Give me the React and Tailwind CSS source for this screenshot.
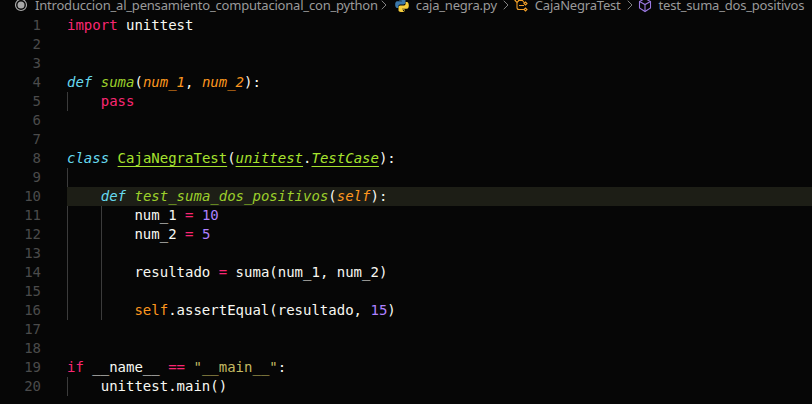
import { ChevronRight } from 'lucide-react'

const C = {
  kw: 'text-[#f92672]',
  def: 'text-[#66d9ef] italic',
  fn: 'text-[#a6e22e]',
  fnI: 'text-[#9ccf2b] italic',
  cls: 'text-[#a6e22e] underline underline-offset-[3px]',
  clsI: 'text-[#a6e22e] italic underline underline-offset-[3px]',
  par: 'text-[#fd971f] italic',
  self: 'text-[#fd971f]',
  num: 'text-[#ae81ff]',
  str: 'text-[#c4b962]',
  op: 'text-[#f92672]',
}

// each line: indent guides, then [text, colour] pairs
const lines = [
  { guides: 0, code: [['import', C.kw], [' unittest']] },
  { guides: 0, code: [] },
  { guides: 0, code: [] },
  { guides: 0, code: [['def', C.def], [' '], ['suma', C.fnI], ['('], ['num_1', C.par], [', '], ['num_2', C.par], ['):']] },
  { guides: 1, code: [['pass', C.kw]] },
  { guides: 0, code: [] },
  { guides: 0, code: [] },
  { guides: 0, code: [['class', C.def], [' '], ['CajaNegraTest', C.cls], ['('], ['unittest', C.clsI], ['.'], ['TestCase', C.clsI], ['):']] },
  { guides: 1, code: [] },
  { guides: 1, active: true, code: [['def', C.def], [' '], ['test_suma_dos_positivos', C.fnI], ['('], ['self', C.par], ['):']] },
  { guides: 2, code: [['num_1 '], ['=', C.op], [' '], ['10', C.num]] },
  { guides: 2, code: [['num_2 '], ['=', C.op], [' '], ['5', C.num]] },
  { guides: 2, code: [] },
  { guides: 2, code: [['resultado '], ['=', C.op], [' suma(num_1, num_2)']] },
  { guides: 2, code: [] },
  { guides: 2, code: [['self', C.self], ['.assertEqual(resultado, '], ['15', C.num], [')']] },
  { guides: 0, code: [] },
  { guides: 0, code: [] },
  { guides: 0, code: [['if', C.kw], [' __name__ '], ['==', C.op], [' '], ['"__main__"', C.str], [':']] },
  { guides: 1, code: [['unittest.main()']] },
]

function PythonIcon({ className }) {
  return (
    <svg width="16" height="16" viewBox="0 0 16 16" className={`shrink-0 ${className}`}>
      <path d="M7.900 1C5.200 1 5.400 2.200 5.400 2.200V3.800H8V4.300H3.400S1.200 4 1.200 7.600s1.900 3.500 1.900 3.500h1.300V9.400S4.300 7.400 6.300 7.400H9.700S11.500 7.400 11.500 5.600V2.800S11.800 1 7.900 1Z" fill="#3c78aa" />
      <path d="M8.100 15C10.800 15 10.600 13.800 10.600 13.800V12.200H8V11.700H12.600S14.800 12 14.800 8.400S12.900 4.900 12.900 4.900H11.600V6.600S11.700 8.600 9.700 8.600H6.300S4.500 8.600 4.500 10.400V13.200S4.200 15 8.100 15Z" fill="#f7cf3d" />
      <circle cx="6.500" cy="2.600" r=".6" fill="#0a0a0a" />
      <circle cx="9.500" cy="13.400" r=".6" fill="#0a0a0a" />
    </svg>
  )
}

function ClassIcon({ className }) {
  return (
    <svg width="16" height="16" viewBox="0 0 16 16" fill="none" stroke="#ee9d28" strokeWidth="1.100" className={`shrink-0 ${className}`}>
      <path d="M2 3.500 4 1.500 6 3.500 4 5.500Z" />
      <path d="M11 6.500 12.500 5 14 6.500 12.500 8Z" />
      <path d="M11 12.500 12.500 11 14 12.500 12.500 14Z" />
      <path d="M5.500 3.500H9.500L11.500 6M4 5.500V10.500Q4 12.500 6 12.500H11M6 8.500H11" />
    </svg>
  )
}

function MethodIcon({ className }) {
  return (
    <svg width="16" height="16" viewBox="0 0 16 16" fill="none" stroke="#9a78e0" strokeWidth="1.100" className={`shrink-0 ${className}`}>
      <path d="M8 1.500 13.500 4.500V11L8 14.500 2.500 11V4.500Z" />
      <path d="M2.500 4.500 8 7.500 13.500 4.500M8 7.500V14.500" />
    </svg>
  )
}

function Sep({ className }) {
  return <ChevronRight size={16} strokeWidth={1.25} className={`shrink-0 text-[#9a9a9a] ${className}`} />
}

export default function App() {
  return (
    <div className="w-[812px] h-[404px] overflow-hidden bg-[#060606] flex flex-col">
      {/* Breadcrumbs, scrolled partly out of view */}
      <div className="h-[10px] mb-[6px] shrink-0 flex items-center pl-[13px] font-['Noto_Sans',sans-serif] text-[13px] leading-[10px] tracking-[-0.2px] whitespace-nowrap text-[#9a9a9a]">
        <svg width="16" height="16" viewBox="0 0 16 16" fill="none" className="shrink-0 mr-[6px]">
          <circle cx="8" cy="8" r="5.500" stroke="#a8a8a8" strokeWidth="1.200" />
          <circle cx="8" cy="8" r="3.500" fill="#a8a8a8" />
        </svg>
        <span>Introduccion_al_pensamiento_computacional_con_python</span>
        <Sep className="-ml-[2px]" />
        <PythonIcon className="ml-[2px]" />
        <span className="ml-[6px]">caja_negra.py</span>
        <Sep className="ml-[1px]" />
        <ClassIcon className="-ml-[1px]" />
        <span className="ml-[6px]">CajaNegraTest</span>
        <Sep className="ml-[1px]" />
        <MethodIcon className="-ml-[1px]" />
        <span className="ml-[6px]">test_suma_dos_positivos</span>
      </div>

      {/* Code */}
      <div className="font-['DejaVu_Sans_Mono',monospace] text-[14px] leading-[19px] text-[#f8f8f2]">
        {lines.map((line, i) => (
          <div key={i} className="flex h-[19px]">
            <div className="w-[41px] shrink-0 text-right text-[#4b4b4b]">{i + 1}</div>
            <div className={`ml-[26px] flex-1 flex whitespace-pre ${line.active ? 'bg-[#1d1e16]' : ''}`}>
              {Array.from({ length: line.guides }).map((_, g) => (
                <div key={g} className={`w-[33.72px] shrink-0 border-l ${line.active ? 'border-transparent' : 'border-[#3b3b3b]'}`} />
              ))}
              <div>
                {line.code.map(([text, cls], j) => (
                  <span key={j} className={cls}>{text}</span>
                ))}
              </div>
            </div>
          </div>
        ))}
      </div>
    </div>
  )
}
